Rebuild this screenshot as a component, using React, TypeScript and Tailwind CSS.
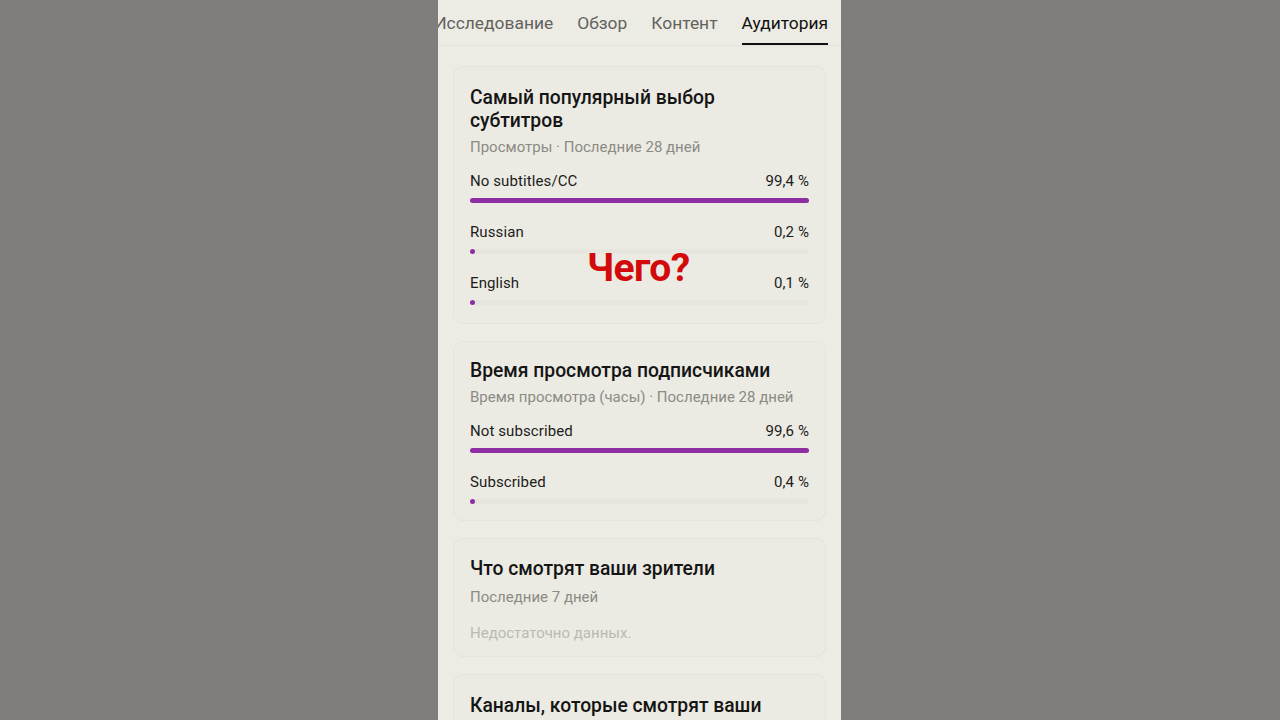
import React from "react";

type Row = { label: string; value: string; pct: number };

function Bar({ pct }: { pct: number }) {
  return (
    <div className="mt-[7px] h-[5px] w-full rounded-full bg-[#e7e6de]">
      <div
        className="h-[5px] rounded-full bg-[#8d2ea3]"
        style={{ width: pct > 5 ? `${pct}%` : "5px" }}
      />
    </div>
  );
}

function Rows({ rows }: { rows: Row[] }) {
  return (
    <div className="flex flex-col">
      {rows.map((r, i) => (
        <div key={r.label} className={i === 0 ? "mt-[14px]" : "mt-[19px]"}>
          <div className="flex h-5 items-center justify-between text-[15px] tracking-[0.1px] text-[#1c1c1c]">
            <span>{r.label}</span>
            <span>{r.value}</span>
          </div>
          <Bar pct={r.pct} />
        </div>
      ))}
    </div>
  );
}

function Card({ children, className = "" }: { children: React.ReactNode; className?: string }) {
  return (
    <div
      className={
        "rounded-[10px] border border-[#e5e4dc] bg-[#ecebe3] px-[16px] " + className
      }
    >
      {children}
    </div>
  );
}

const titleCls = "text-[19.3px] font-medium leading-[23px] text-[#151515]";

export default function App() {
  return (
    <div
      className="flex h-[720px] w-[1280px] justify-center overflow-hidden bg-[#7f7e7b]"
      style={{ fontFamily: "Roboto, 'Noto Sans', sans-serif" }}
    >
      <div className="relative ml-[-1px] flex h-[720px] w-[403px] flex-col overflow-hidden bg-[#edece4]">
        {/* tabs */}
        <div className="flex h-[46px] shrink-0 items-end justify-end gap-[24px] whitespace-nowrap border-b border-[#e4e3db] pr-[13px] text-[17.4px] text-[#62625e]">
          <div className="pb-[9px]">Исследование</div>
          <div className="pb-[9px]">Обзор</div>
          <div className="pb-[9px]">Контент</div>
          <div className="border-b-2 border-[#111] pb-[7px] text-[#111]">Аудитория</div>
        </div>

        <div className="flex flex-col gap-[17px] px-[15px] pt-[20px]">
          <Card className="pb-[18px] pt-[19px]">
            <div className={titleCls}>
              Самый популярный выбор
              <br />
              субтитров
            </div>
            <div className="mt-[5px] text-[15px] leading-5 text-[#8b8a85]">
              Просмотры · Последние 28 дней
            </div>
            <Rows
              rows={[
                { label: "No subtitles/CC", value: "99,4 %", pct: 100 },
                { label: "Russian", value: "0,2 %", pct: 0.2 },
                { label: "English", value: "0,1 %", pct: 0.1 },
              ]}
            />
          </Card>

          <Card className="pb-[16px] pt-[17px]">
            <div className={titleCls}>Время просмотра подписчиками</div>
            <div className="mt-[5px] text-[15px] leading-5 text-[#8b8a85]">
              Время просмотра (часы) · Последние 28 дней
            </div>
            <Rows
              rows={[
                { label: "Not subscribed", value: "99,6 %", pct: 100 },
                { label: "Subscribed", value: "0,4 %", pct: 0.4 },
              ]}
            />
          </Card>

          <Card className="pb-[13px] pt-[18px]">
            <div className={titleCls}>Что смотрят ваши зрители</div>
            <div className="mt-[7px] text-[15px] leading-5 text-[#8b8a85]">
              Последние 7 дней
            </div>
            <div className="mt-[16px] text-[15px] leading-5 text-[#bab9b3]">
              Недостаточно данных.
            </div>
          </Card>

          <Card className="pb-[18px] pt-[19px]">
            <div className={titleCls}>
              Каналы, которые смотрят ваши
              <br />
              зрители
            </div>
          </Card>
        </div>

        {/* overlay caption */}
        <div className="absolute left-[149px] top-[244px] text-[39px] font-bold leading-[48px] tracking-[-0.6px] text-[#d20a0a]">
          Чего?
        </div>
      </div>
    </div>
  );
}
